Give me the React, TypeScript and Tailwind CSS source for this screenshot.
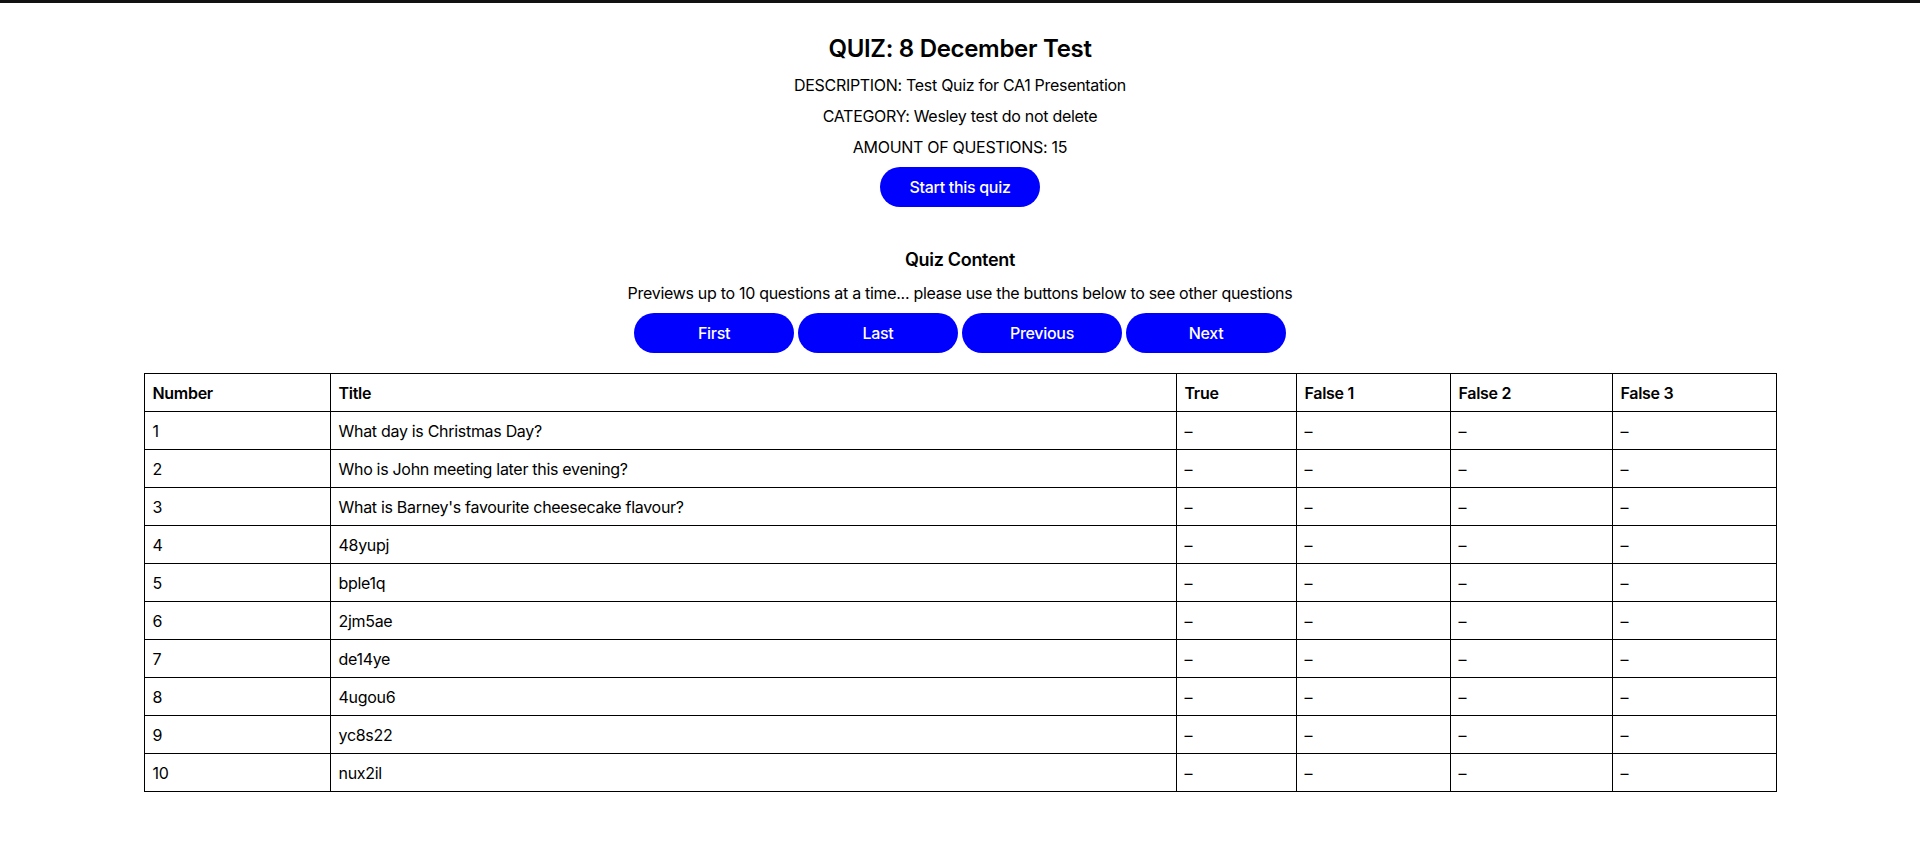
import React from 'react';

const questions = [
  'What day is Christmas Day?',
  'Who is John meeting later this evening?',
  "What is Barney's favourite cheesecake flavour?",
  '48yupj',
  'bple1q',
  '2jm5ae',
  'de14ye',
  '4ugou6',
  'yc8s22',
  'nux2il',
];

const cell = 'border border-black px-2 h-[38px] text-left align-middle';

const App = () => {
  return (
    <div className="min-h-screen bg-white text-black font-['Inter',sans-serif] tracking-[-0.3px]">
      <div className="h-[3px] bg-[#111111]"></div>
      <div className="text-center">
        <h1 className="text-2xl leading-8 font-semibold mt-[30px]">QUIZ: 8 December Test</h1>
        <p className="leading-6 mt-2">DESCRIPTION: Test Quiz for CA1 Presentation</p>
        <p className="leading-6 mt-[7px]">CATEGORY: Wesley test do not delete</p>
        <p className="leading-6 mt-[7px]">AMOUNT OF QUESTIONS: 15</p>
        <button className="mt-2 w-40 h-10 rounded-full bg-[#0000ff] text-white font-medium">
          Start this quiz
        </button>

        <h2 className="text-lg leading-7 font-semibold mt-[39px]">Quiz Content</h2>
        <p className="leading-6 mt-[7px]">
          Previews up to 10 questions at a time... please use the buttons below to see other questions
        </p>
        <div className="mt-2 flex justify-center gap-1">
          {['First', 'Last', 'Previous', 'Next'].map((b) => (
            <button key={b} className="w-40 h-10 rounded-full bg-[#0000ff] text-white font-medium">
              {b}
            </button>
          ))}
        </div>
      </div>

      <table className="mt-5 mx-auto w-[85%] border-collapse table-fixed">
        <colgroup>
          <col className="w-[186px]" />
          <col className="w-[846px]" />
          <col className="w-[120px]" />
          <col className="w-[154px]" />
          <col className="w-[162px]" />
          <col className="w-[164px]" />
        </colgroup>
        <thead>
          <tr>
            <th className={cell + ' font-semibold'}>Number</th>
            <th className={cell + ' font-semibold'}>Title</th>
            <th className={cell + ' font-semibold'}>True</th>
            <th className={cell + ' font-semibold'}>False 1</th>
            <th className={cell + ' font-semibold'}>False 2</th>
            <th className={cell + ' font-semibold'}>False 3</th>
          </tr>
        </thead>
        <tbody>
          {questions.map((q, i) => (
            <tr key={i}>
              <td className={cell}>{i + 1}</td>
              <td className={cell}>{q}</td>
              <td className={cell}>–</td>
              <td className={cell}>–</td>
              <td className={cell}>–</td>
              <td className={cell}>–</td>
            </tr>
          ))}
        </tbody>
      </table>
    </div>
  );
};

export default App;
